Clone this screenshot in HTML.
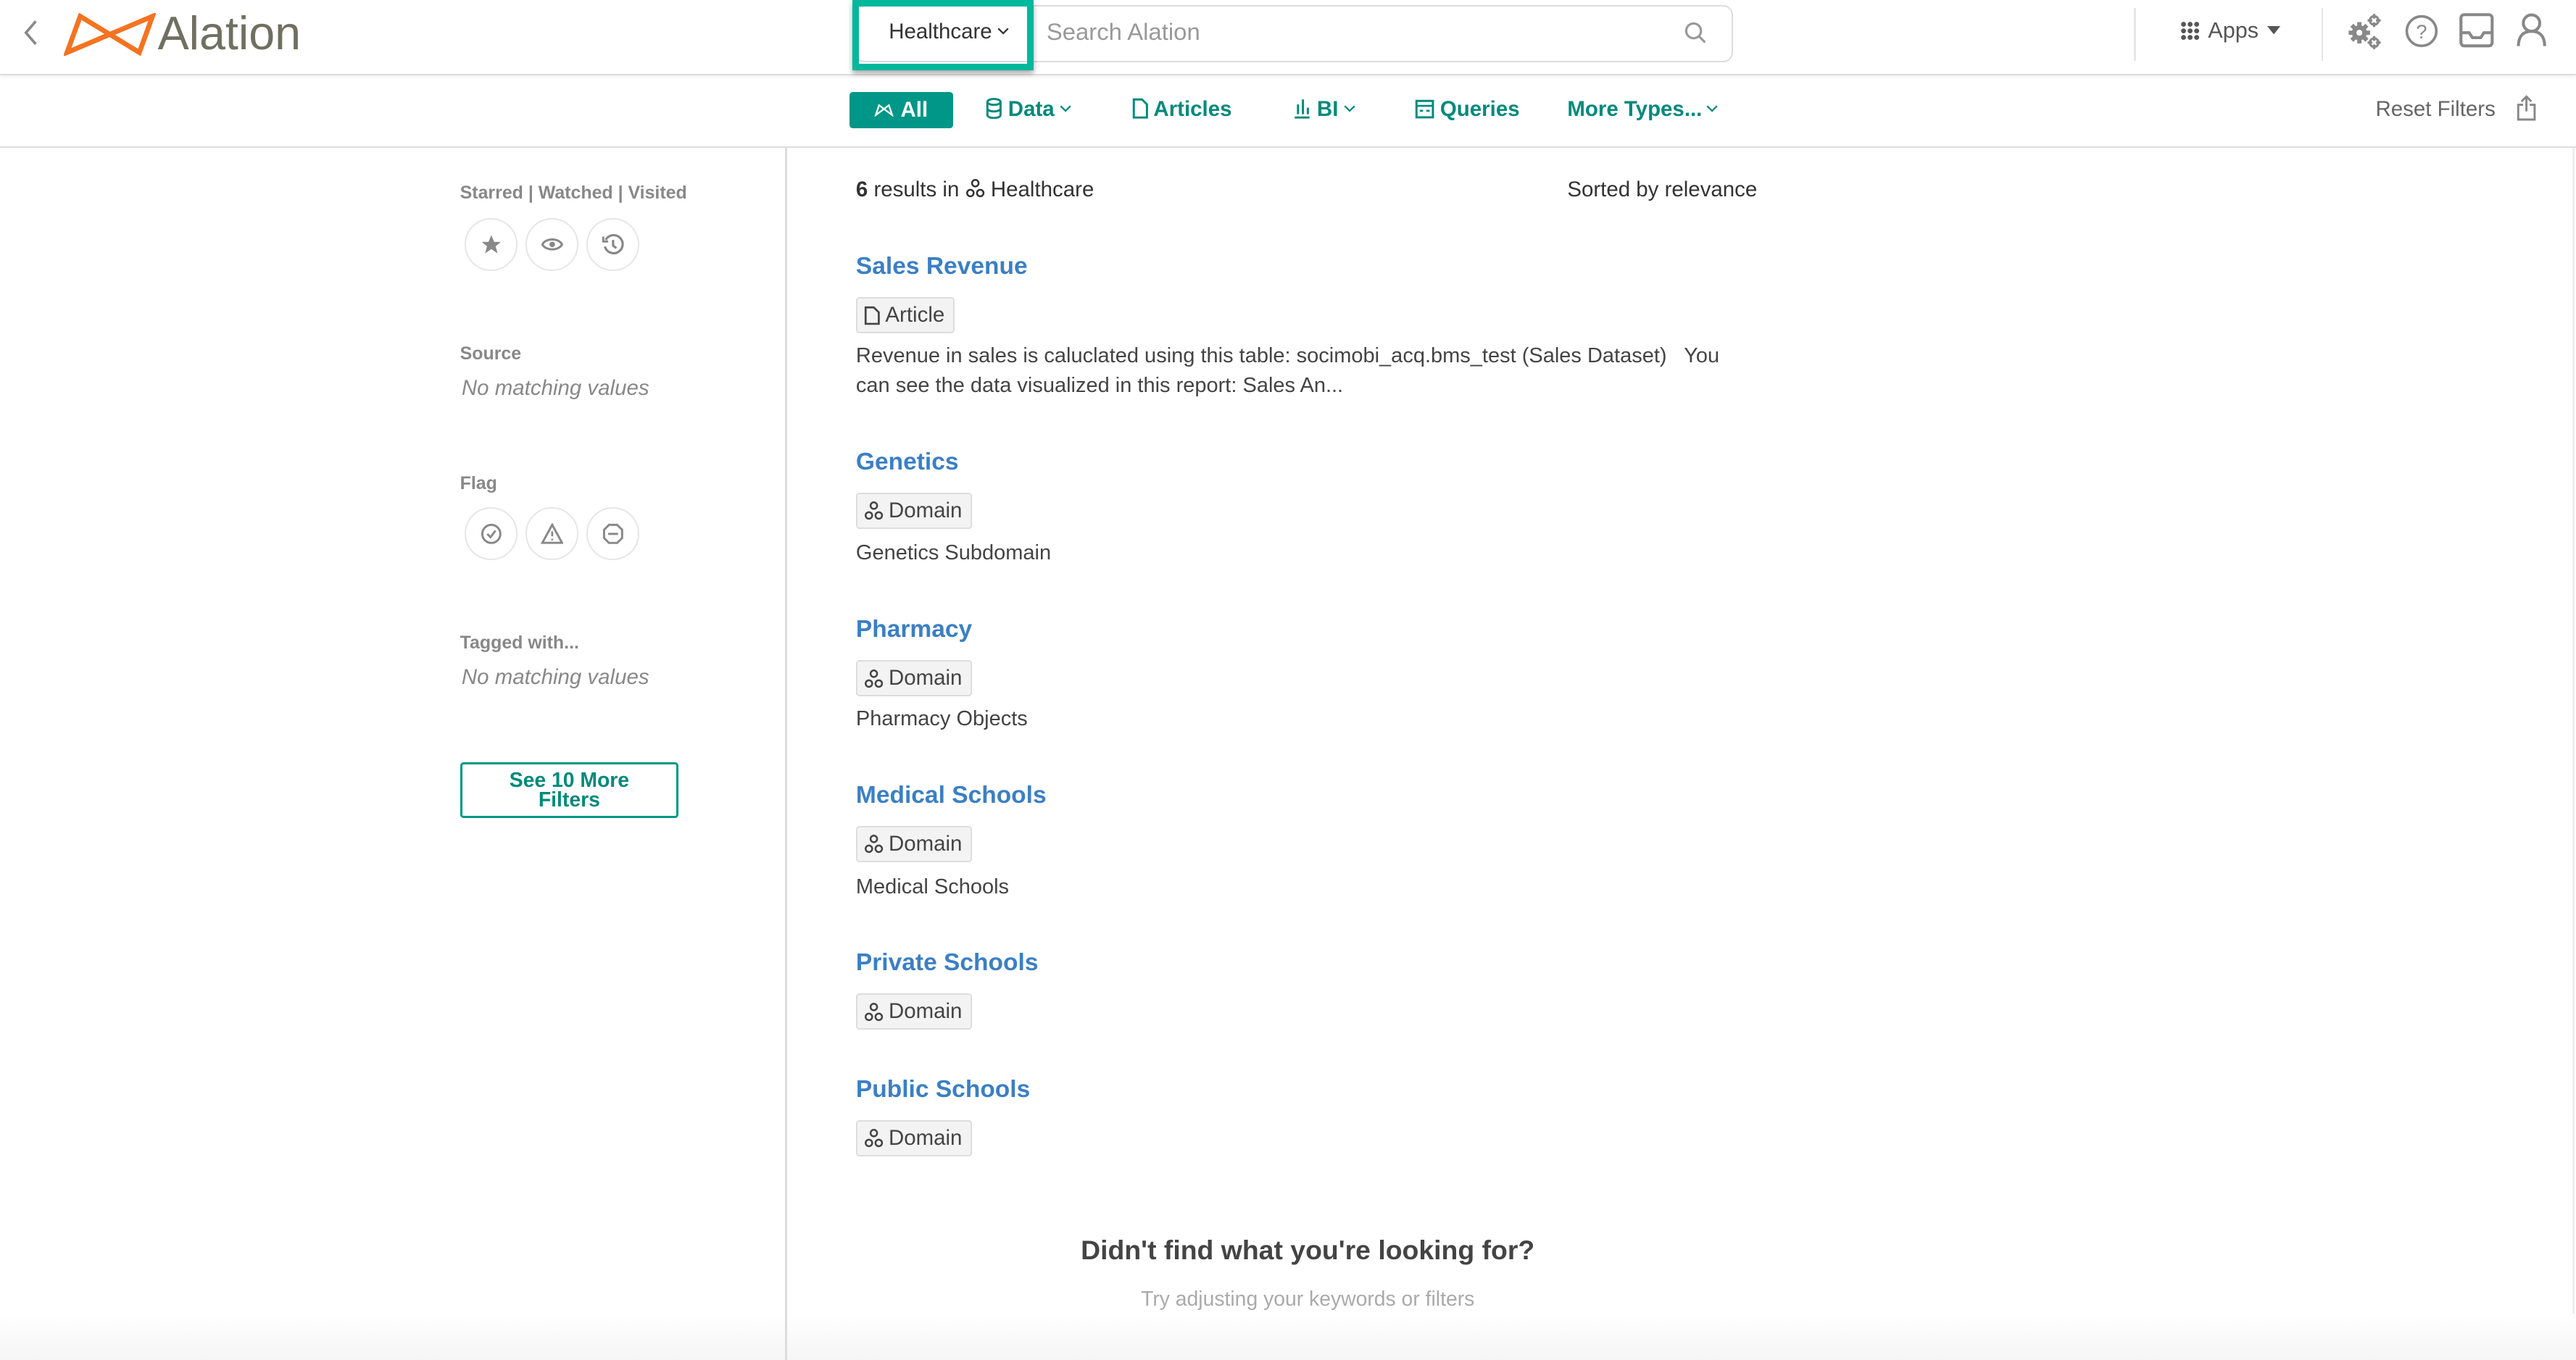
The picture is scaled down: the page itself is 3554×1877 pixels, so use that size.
<!DOCTYPE html>
<html><head><meta charset="utf-8">
<style>
html{zoom:2.2666;}
*{box-sizing:border-box;margin:0;padding:0}
body{width:1568px;height:828px;overflow:hidden;background:#fff;font-family:"Liberation Sans",Arial,sans-serif;position:relative;color:#333}
.a{position:absolute;white-space:nowrap}
.hdr{left:0;top:0;width:1568px;height:46px;border-bottom:1px solid #ddd;box-shadow:0 1px 2px rgba(0,0,0,.06)}
.frow{left:0;top:46px;width:1568px;height:44px;border-bottom:1px solid #ddd}
.teal{color:#00897b;font-weight:bold;font-size:13px}
.circ{width:32px;height:32px;border:1px solid #e6e6e6;border-radius:50%;display:flex;align-items:center;justify-content:center}
.sh{font-size:11px;font-weight:bold;color:#888}
.nm{font-size:13px;font-style:italic;color:#888}
.title{font-size:14.8px;font-weight:bold;color:#3b7fc4}
.badge{height:22px;border:1px solid #ddd;background:#f3f3f3;border-radius:2px;font-size:13px;color:#444;display:flex;align-items:center;padding:0 5px 0 4px;gap:3px}
.desc{font-size:12.8px;color:#444;line-height:18px}
.chev{display:inline-block;vertical-align:2px;margin-left:1px}
</style></head><body>
<div class="a hdr"></div>
<svg class="a" style="left:13px;top:12px" width="12" height="16" viewBox="0 0 12 16"><path d="M9 1L3 8l6 7" fill="none" stroke="#888" stroke-width="1.6"/></svg>
<svg class="a" style="left:39px;top:8px" width="56" height="26" viewBox="0 0 56 26"><path d="M10 2L2 24L54 2L46 24Z" fill="none" stroke="#f47321" stroke-width="3"/></svg>
<div class="a" style="left:96px;top:4px;font-size:28.5px;color:#6f7060">Alation</div>
<div class="a" style="left:520px;top:3px;width:535px;height:35px;border:1px solid #ddd;border-radius:6px"></div>
<div class="a" style="left:519px;top:0;width:110px;height:43px;border:4px solid #00b89c;box-shadow:0 2px 3px rgba(0,0,0,.35)"></div>
<div class="a" style="left:541px;top:12px;font-size:13px;color:#333">Healthcare<svg class="chev" width="8" height="5" viewBox="0 0 8 5" style="margin-left:3px"><path d="M1 1l3 3 3-3" fill="none" stroke="#333" stroke-width="1"/></svg></div>
<div class="a" style="left:637px;top:11px;font-size:14.5px;color:#999">Search Alation</div>
<svg class="a" style="left:1025px;top:13px" width="14" height="14" viewBox="0 0 14 14"><circle cx="6" cy="6" r="4.5" fill="none" stroke="#999" stroke-width="1.4"/><path d="M9.3 9.3L13 13" stroke="#999" stroke-width="1.4"/></svg>
<div class="a" style="left:1299px;top:5px;width:1px;height:32px;background:#e6e6e6"></div>
<div class="a" style="left:1413px;top:5px;width:1px;height:32px;background:#e6e6e6"></div>
<svg class="a" style="left:1327px;top:13px" width="12" height="12" viewBox="0 0 12 12" fill="#555"><circle cx="2" cy="2" r="1.5"/><circle cx="6" cy="2" r="1.5"/><circle cx="10" cy="2" r="1.5"/><circle cx="2" cy="6" r="1.5"/><circle cx="6" cy="6" r="1.5"/><circle cx="10" cy="6" r="1.5"/><circle cx="2" cy="10" r="1.5"/><circle cx="6" cy="10" r="1.5"/><circle cx="10" cy="10" r="1.5"/></svg>
<div class="a" style="left:1344px;top:11px;font-size:13.5px;color:#555">Apps</div>
<svg class="a" style="left:1380px;top:16px" width="8" height="5"><path d="M0 0h8L4 5z" fill="#555"/></svg>
<svg class="a" style="left:1428px;top:8px" width="22" height="22" viewBox="0 0 22 22" fill="#888">
<g transform="translate(8,12)"><circle r="4.6"/><rect x="-1.3" y="-6.5" width="2.6" height="13"/><rect x="-6.5" y="-1.3" width="13" height="2.6"/><rect x="-1.3" y="-6.5" width="2.6" height="13" transform="rotate(45)"/><rect x="-1.3" y="-6.5" width="2.6" height="13" transform="rotate(-45)"/><circle r="1.8" fill="#fff"/></g>
<g transform="translate(17,4.5)"><circle r="2.6" fill="none" stroke="#888" stroke-width="1.4"/><rect x="-.7" y="-4" width="1.4" height="8"/><rect x="-4" y="-.7" width="8" height="1.4"/><circle r="1.2" fill="#fff"/></g>
<g transform="translate(17,18)"><circle r="2.6" fill="none" stroke="#888" stroke-width="1.4"/><rect x="-.7" y="-4" width="1.4" height="8"/><rect x="-4" y="-.7" width="8" height="1.4"/><circle r="1.2" fill="#fff"/></g></svg>
<svg class="a" style="left:1463px;top:8px" width="22" height="22" viewBox="0 0 22 22"><circle cx="11" cy="11" r="9" fill="none" stroke="#888" stroke-width="1.6"/><text x="11" y="15.5" font-size="12" text-anchor="middle" fill="#888" font-family="Liberation Sans">?</text></svg>
<svg class="a" style="left:1497px;top:8px" width="21" height="21" viewBox="0 0 21 21"><rect x="1" y="1" width="19" height="19" rx="2" fill="none" stroke="#888" stroke-width="1.8"/><path d="M1 12h5l2 3h5l2-3h5" fill="none" stroke="#888" stroke-width="1.8"/></svg>
<svg class="a" style="left:1531px;top:7px" width="20" height="22" viewBox="0 0 20 22"><circle cx="10" cy="7" r="5" fill="none" stroke="#888" stroke-width="1.8"/><path d="M2 21c0-6 3-9 8-9s8 3 8 9" fill="none" stroke="#888" stroke-width="1.8"/></svg>

<div class="a frow"></div>
<div class="a" style="left:517px;top:56px;width:63px;height:22px;background:#009688;border-radius:2px;color:#fff;font-weight:bold;font-size:13px;display:flex;align-items:center;justify-content:center;gap:4px"><svg width="12" height="8" viewBox="0 0 12 8"><path d="M1 7L3 1L11 7L9 1Z" fill="none" stroke="#fff" stroke-width="1"/></svg>All</div>
<div class="a teal" style="left:600px;top:59px"><svg width="10" height="13" viewBox="0 0 10 13" style="vertical-align:-2px"><ellipse cx="5" cy="2.5" rx="4" ry="1.8" fill="none" stroke="#00897b" stroke-width="1.3"/><path d="M1 2.5v8c0 1 1.8 1.8 4 1.8s4-.8 4-1.8v-8M1 6.5c0 1 1.8 1.8 4 1.8s4-.8 4-1.8" fill="none" stroke="#00897b" stroke-width="1.3"/></svg> Data<svg class="chev" width="8" height="5" viewBox="0 0 8 5" style="margin-left:3px"><path d="M1 1l3 3 3-3" fill="none" stroke="#00897b" stroke-width="1"/></svg></div>
<div class="a teal" style="left:689px;top:59px"><svg width="10" height="13" viewBox="0 0 10 13" style="vertical-align:-2px"><path d="M1 1h5l3 3v8H1z" fill="none" stroke="#00897b" stroke-width="1.3"/></svg> Articles</div>
<div class="a teal" style="left:787px;top:59px"><svg width="11" height="13" viewBox="0 0 11 13" style="vertical-align:-2px"><path d="M3 4v6M6 1v9M9 6v4M1 12h9" stroke="#00897b" stroke-width="1.3"/></svg> BI<svg class="chev" width="8" height="5" viewBox="0 0 8 5" style="margin-left:3px"><path d="M1 1l3 3 3-3" fill="none" stroke="#00897b" stroke-width="1"/></svg></div>
<div class="a teal" style="left:861px;top:59px"><svg width="12" height="12" viewBox="0 0 12 12" style="vertical-align:-2px"><rect x="1" y="1" width="10" height="10" fill="none" stroke="#00897b" stroke-width="1.3"/><path d="M1 4h10M3 7h2M7 7h2" stroke="#00897b" stroke-width="1.2"/></svg> Queries</div>
<div class="a teal" style="left:954px;top:59px">More Types...<svg class="chev" width="8" height="5" viewBox="0 0 8 5" style="margin-left:2px"><path d="M1 1l3 3 3-3" fill="none" stroke="#00897b" stroke-width="1"/></svg></div>
<div class="a" style="left:1446px;top:59px;font-size:13px;color:#666">Reset Filters</div>
<svg class="a" style="left:1532px;top:58px" width="12" height="16" viewBox="0 0 12 16"><path d="M4 6H1v9h10V6H8M6 10V1M3 4l3-3 3 3" fill="none" stroke="#888" stroke-width="1.3"/></svg>

<div class="a" style="left:478px;top:90px;width:1px;height:738px;background:#ddd"></div>
<div class="a" style="left:1566px;top:90px;width:1px;height:738px;background:#eee"></div>
<div class="a sh" style="left:280px;top:111px">Starred | Watched | Visited</div>
<div class="a circ" style="left:283px;top:133px"><svg width="14" height="14" viewBox="0 0 24 24"><path d="M12 2l3 7h7l-5.5 4.5 2 7.5L12 16.5 5.5 21l2-7.5L2 9h7z" fill="#888"/></svg></div>
<div class="a circ" style="left:320px;top:133px"><svg width="14" height="10" viewBox="0 0 14 10"><path d="M1 5c2-4 10-4 12 0c-2 4-10 4-12 0z" fill="none" stroke="#888" stroke-width="1.3"/><circle cx="7" cy="5" r="1.7" fill="#888"/></svg></div>
<div class="a circ" style="left:357px;top:133px"><svg width="14" height="14" viewBox="0 0 14 14"><path d="M2.5 4A5.5 5.5 0 1 1 2 8" fill="none" stroke="#888" stroke-width="1.4"/><path d="M1 2v3h3" fill="none" stroke="#888" stroke-width="1.3"/><path d="M7 4v3.5l2 1.5" fill="none" stroke="#888" stroke-width="1.4"/></svg></div>
<div class="a sh" style="left:280px;top:209px">Source</div>
<div class="a nm" style="left:281px;top:229px">No matching values</div>
<div class="a sh" style="left:280px;top:288px">Flag</div>
<div class="a circ" style="left:283px;top:309px"><svg width="14" height="14" viewBox="0 0 14 14"><circle cx="7" cy="7" r="5.5" fill="none" stroke="#888" stroke-width="1.3"/><path d="M4.5 7l2 2 3-4" fill="none" stroke="#888" stroke-width="1.3"/></svg></div>
<div class="a circ" style="left:320px;top:309px"><svg width="14" height="13" viewBox="0 0 14 13"><path d="M7 1L13 12H1z" fill="none" stroke="#888" stroke-width="1.3"/><path d="M7 5v3M7 9.5v1" stroke="#888" stroke-width="1.2"/></svg></div>
<div class="a circ" style="left:357px;top:309px"><svg width="14" height="14" viewBox="0 0 14 14"><path d="M4.5 1.5h5l3 3v5l-3 3h-5l-3-3v-5z" fill="none" stroke="#888" stroke-width="1.3"/><path d="M4 7h6" stroke="#888" stroke-width="1.3"/></svg></div>
<div class="a sh" style="left:280px;top:385px">Tagged with...</div>
<div class="a nm" style="left:281px;top:405px">No matching values</div>
<div class="a" style="left:280px;top:464px;width:133px;height:34px;border:1.5px solid #009688;border-radius:2px;color:#00897b;font-weight:bold;font-size:12.5px;line-height:12px;text-align:center;padding-top:4px;white-space:normal">See 10 More<br>Filters</div>

<div class="a" style="left:521px;top:108px;font-size:13px;color:#333"><b>6</b> results in <svg width="12" height="12" viewBox="0 0 12 12" style="vertical-align:-1px"><circle cx="6" cy="3" r="2" fill="none" stroke="#333" stroke-width="1.1"/><circle cx="3" cy="9" r="2" fill="none" stroke="#333" stroke-width="1.1"/><circle cx="9" cy="9" r="2" fill="none" stroke="#333" stroke-width="1.1"/></svg> Healthcare</div>
<div class="a" style="left:954px;top:108px;font-size:13px;color:#333">Sorted by relevance</div>

<div class="a title" style="left:521px;top:154px">Sales Revenue</div>
<div class="a badge" style="left:521px;top:181px"><svg width="10" height="12" viewBox="0 0 10 12"><path d="M1 1h5l3 3v7H1z" fill="none" stroke="#444" stroke-width="1.2"/></svg>Article</div>
<div class="a desc" style="left:521px;top:208px">Revenue in sales is caluclated using this table: socimobi_acq.bms_test (Sales Dataset) &nbsp; You<br>can see the data visualized in this report: Sales An...</div>

<div class="a title" style="left:521px;top:273px">Genetics</div>
<div class="a badge" style="left:521px;top:300px"><svg width="12" height="12" viewBox="0 0 12 12"><circle cx="6" cy="3" r="2" fill="none" stroke="#444" stroke-width="1.1"/><circle cx="3" cy="9" r="2" fill="none" stroke="#444" stroke-width="1.1"/><circle cx="9" cy="9" r="2" fill="none" stroke="#444" stroke-width="1.1"/></svg>Domain</div>
<div class="a desc" style="left:521px;top:328px">Genetics Subdomain</div>

<div class="a title" style="left:521px;top:375px">Pharmacy</div>
<div class="a badge" style="left:521px;top:402px"><svg width="12" height="12" viewBox="0 0 12 12"><circle cx="6" cy="3" r="2" fill="none" stroke="#444" stroke-width="1.1"/><circle cx="3" cy="9" r="2" fill="none" stroke="#444" stroke-width="1.1"/><circle cx="9" cy="9" r="2" fill="none" stroke="#444" stroke-width="1.1"/></svg>Domain</div>
<div class="a desc" style="left:521px;top:429px">Pharmacy Objects</div>

<div class="a title" style="left:521px;top:476px">Medical Schools</div>
<div class="a badge" style="left:521px;top:503px"><svg width="12" height="12" viewBox="0 0 12 12"><circle cx="6" cy="3" r="2" fill="none" stroke="#444" stroke-width="1.1"/><circle cx="3" cy="9" r="2" fill="none" stroke="#444" stroke-width="1.1"/><circle cx="9" cy="9" r="2" fill="none" stroke="#444" stroke-width="1.1"/></svg>Domain</div>
<div class="a desc" style="left:521px;top:531px">Medical Schools</div>

<div class="a title" style="left:521px;top:578px">Private Schools</div>
<div class="a badge" style="left:521px;top:605px"><svg width="12" height="12" viewBox="0 0 12 12"><circle cx="6" cy="3" r="2" fill="none" stroke="#444" stroke-width="1.1"/><circle cx="3" cy="9" r="2" fill="none" stroke="#444" stroke-width="1.1"/><circle cx="9" cy="9" r="2" fill="none" stroke="#444" stroke-width="1.1"/></svg>Domain</div>

<div class="a title" style="left:521px;top:655px">Public Schools</div>
<div class="a badge" style="left:521px;top:682px"><svg width="12" height="12" viewBox="0 0 12 12"><circle cx="6" cy="3" r="2" fill="none" stroke="#444" stroke-width="1.1"/><circle cx="3" cy="9" r="2" fill="none" stroke="#444" stroke-width="1.1"/><circle cx="9" cy="9" r="2" fill="none" stroke="#444" stroke-width="1.1"/></svg>Domain</div>

<div class="a" style="left:0;top:800px;width:1568px;height:28px;background:linear-gradient(#fff,#f5f5f5)"></div>
<div class="a" style="left:596px;top:752px;width:400px;text-align:center;font-size:16.5px;font-weight:bold;color:#444">Didn't find what you're looking for?</div>
<div class="a" style="left:596px;top:784px;width:400px;text-align:center;font-size:12.5px;color:#aaa">Try adjusting your keywords or filters</div>
<div class="a" style="left:478px;top:800px;width:1px;height:28px;background:#ddd"></div>
</body></html>
